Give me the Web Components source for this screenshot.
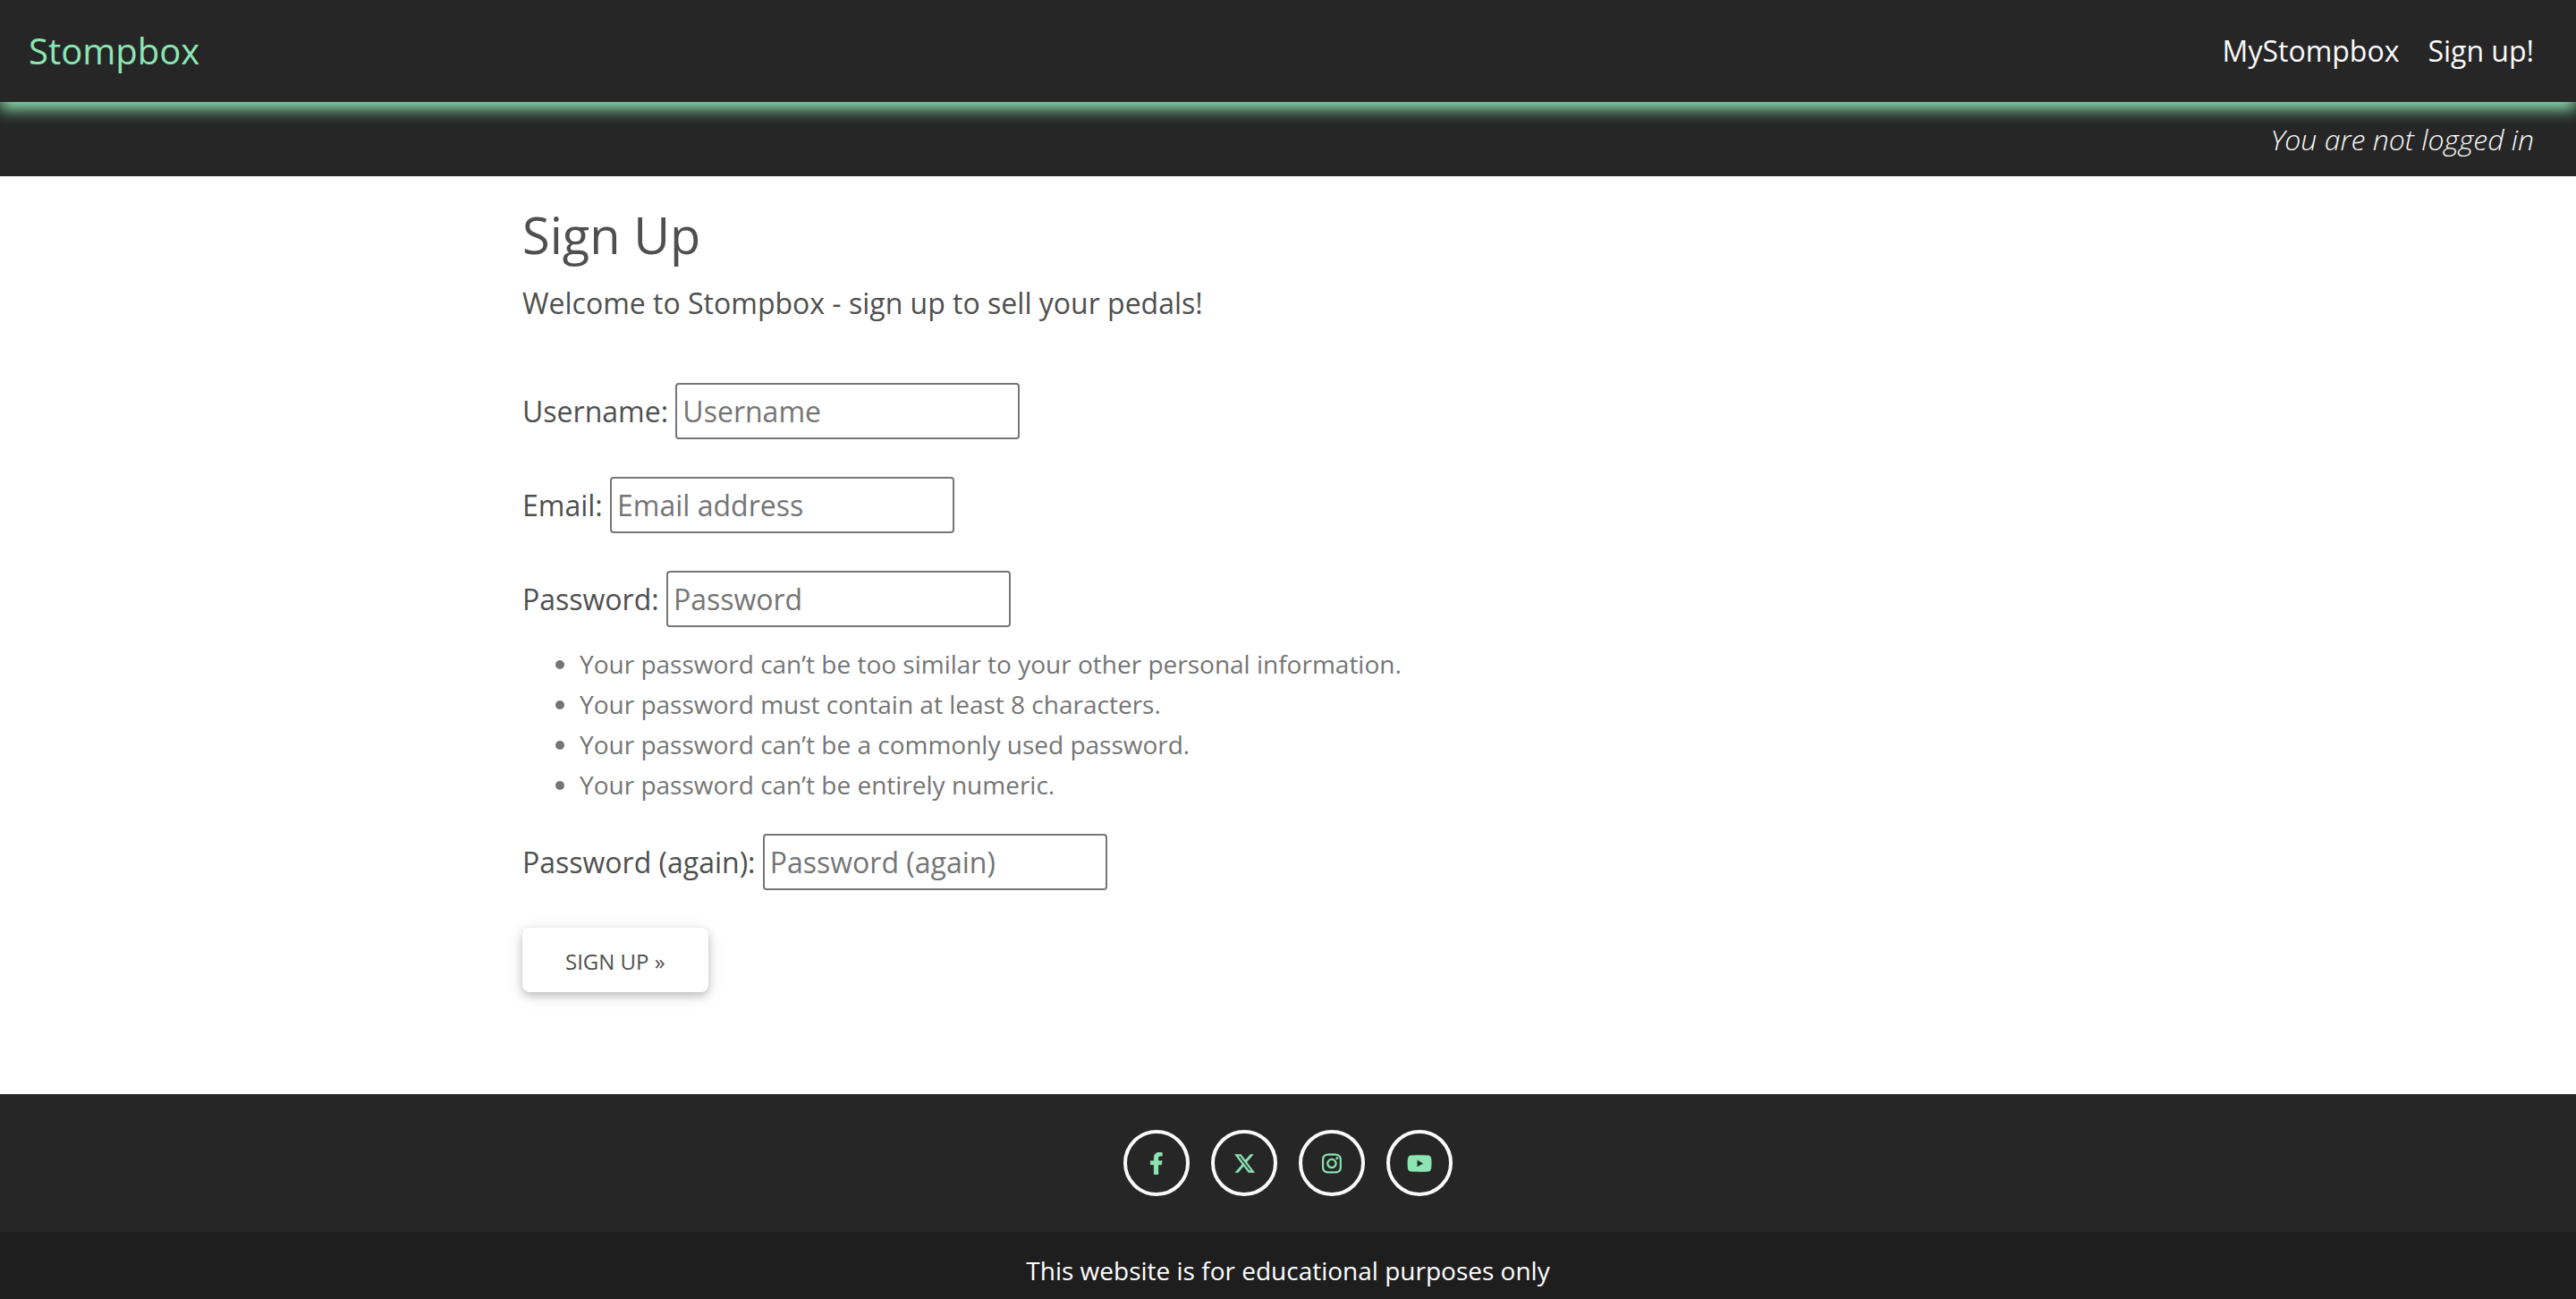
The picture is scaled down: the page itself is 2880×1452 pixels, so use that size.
<!DOCTYPE html>
<html lang="en">
<head>
<meta charset="utf-8">
<title>Stompbox - Sign Up</title>
<style>
  html { font-size: 32px; }
  body {
    --ink: #4f4f4f; --dark: #262626; --darker: #1e1e1e; --mint: #8ce6b4; --light: #fafafa;
    margin: 0; min-height: 100vh; display: flex; flex-direction: column;
    background: #fff; color: var(--ink);
    font: 32px/51px "Open Sans", "Noto Sans", sans-serif;
  }
  signup-page { flex: 1; }
</style>
</head>
<body>
<site-header>
  <a slot="brand" href="#">Stompbox</a>
  <a slot="nav" href="#">MyStompbox</a>
  <a slot="nav" href="#">Sign up!</a>
</site-header>
<status-bar>You are not logged in</status-bar>
<signup-page></signup-page>
<site-footer>This website is for educational purposes only</site-footer>

<script>
const define = (name, html) => {
  const template = document.createElement('template');
  template.innerHTML = html;
  customElements.define(name, class extends HTMLElement {
    constructor() {
      super();
      this.attachShadow({ mode: 'open' }).append(template.content.cloneNode(true));
    }
  });
};

define('site-header', `
<style>
  :host { display: block; position: relative; z-index: 1; background: var(--dark);
    box-shadow: 0 8px 16px var(--mint); }
  nav { display: flex; align-items: center; justify-content: space-between; height: 112px; padding: 0 47px 2px 32px; }
  .links { display: flex; gap: 32px; }
  ::slotted(a) { text-decoration: none; color: var(--light); }
  ::slotted(a[slot="brand"]) { color: var(--mint); font-size: 40px; }
</style>
<nav><slot name="brand"></slot><div class="links"><slot name="nav"></slot></div></nav>`);

define('status-bar', `
<style>
  :host { display: block; background: var(--dark); color: var(--light); padding: 16px 47px;
    text-align: right; font-style: italic; font-weight: 300; }
</style>
<slot></slot>`);

customElements.define('form-field', class extends HTMLElement {
  constructor() {
    super();
    const label = this.getAttribute('label');
    const hint = this.getAttribute('placeholder');
    this.attachShadow({ mode: 'open' }).innerHTML = `
<style>
  :host { display: block; }
  input { box-sizing: border-box; width: 385px; height: 63px; margin: 0; padding: 2px 6px;
    border: 2px solid #767676; border-radius: 4px; background: #fff; color: inherit; font: inherit; }
  input::placeholder { color: #757575; opacity: 1; }
</style>
<label for="field">${label}:</label>
<input id="field" type="${this.getAttribute('type')}" placeholder="${hint}">`;
  }
});

define('password-rules', `
<style>
  :host { display: block; color: #757575; font-size: 28px; line-height: 45px; }
  ul { margin: 0; padding: 0 0 0 64px; }
</style>
<ul>
  <li>Your password can’t be too similar to your other personal information.</li>
  <li>Your password must contain at least 8 characters.</li>
  <li>Your password can’t be a commonly used password.</li>
  <li>Your password can’t be entirely numeric.</li>
</ul>`);

define('raised-button', `
<style>
  :host { display: block; }
  button { display: block; border: 0; border-radius: 8px; background: #fff; color: inherit;
    padding: 20px 48px 16px; font: inherit; font-size: 24px; line-height: 36px; text-transform: uppercase;
    box-shadow: 0 4px 10px rgba(0,0,0,.2), 0 4px 20px rgba(0,0,0,.1); }
</style>
<button type="submit"><slot></slot></button>`);

define('signup-page', `
<style>
  :host { display: block; }
  main { box-sizing: border-box; max-width: 1760px; margin: 0 auto; padding: 32px 24px; }
  h1 { margin: 0 0 18px; font-size: 56px; line-height: 66px; font-weight: 500; }
  p { margin: 0 0 64px; }
  form { display: flex; flex-direction: column; align-items: flex-start; }
  form-field { margin-bottom: 42px; }
  form-field.tight { margin-bottom: 19px; }
  password-rules { margin-bottom: 32px; }
</style>
<main>
  <h1>Sign Up</h1>
  <p>Welcome to Stompbox - sign up to sell your pedals!</p>
  <form>
    <form-field label="Username" type="text" placeholder="Username"></form-field>
    <form-field label="Email" type="email" placeholder="Email address"></form-field>
    <form-field class="tight" label="Password" type="password" placeholder="Password"></form-field>
    <password-rules></password-rules>
    <form-field label="Password (again)" type="password" placeholder="Password (again)"></form-field>
    <raised-button>Sign Up »</raised-button>
  </form>
</main>`);

define('social-link', `
<style>
  :host { display: block; }
  a { box-sizing: border-box; display: flex; align-items: center; justify-content: center;
    width: 74px; height: 74px; border: 4px solid var(--light); border-radius: 50%; color: var(--mint); }
</style>
<a href="#"><slot></slot></a>`);

define('site-footer', `
<style>
  :host { display: block; text-align: center; color: #fff; }
  .social { display: flex; justify-content: center; gap: 24px; background: var(--dark); padding: 40px 32px; }
  .note { background: var(--darker); padding: 21px 32px 9px; font-size: 28px; line-height: 45px; }
  svg { display: block; height: 25px; fill: currentColor; stroke: currentColor; stroke-width: 6; }
</style>
<div class="social">
  <social-link aria-label="Facebook"><svg viewBox="0 0 320 512"><path d="M279.14 288l14.22-92.66h-88.91v-60.13c0-25.35 12.42-50.06 52.24-50.06h40.42V6.26S260.43 0 225.36 0c-73.22 0-121.08 44.38-121.08 124.72v70.62H22.89V288h81.39v224h100.17V288z"/></svg></social-link>
  <social-link aria-label="X"><svg viewBox="0 0 512 512"><path d="M389.2 48h70.6L305.6 224.2 487 464H345L233.700 318.600 106.500 464H35.800L200.700 275.500 26.800 48H172.400L272.900 180.900 389.200 48zM364.400 421.800h39.100L151.100 88h-42L364.400 421.800z"/></svg></social-link>
  <social-link aria-label="Instagram"><svg viewBox="0 0 448 512"><path d="M224.100 141c-63.600 0-114.900 51.300-114.900 114.900s51.300 114.900 114.900 114.900S339 319.500 339 255.900 287.700 141 224.100 141zm0 189.600c-41.100 0-74.700-33.500-74.700-74.700s33.500-74.700 74.700-74.700 74.700 33.500 74.700 74.700-33.600 74.700-74.700 74.700zm146.400-194.300c0 14.900-12 26.800-26.800 26.800-14.900 0-26.800-12-26.800-26.800s12-26.800 26.800-26.800 26.800 12 26.800 26.800zm76.100 27.200c-1.700-35.900-9.900-67.700-36.200-93.900-26.200-26.200-58-34.400-93.900-36.200-37-2.100-147.900-2.100-184.900 0-35.800 1.700-67.600 9.900-93.900 36.100s-34.400 58-36.200 93.900c-2.100 37-2.100 147.900 0 184.900 1.700 35.900 9.900 67.700 36.200 93.900s58 34.400 93.900 36.200c37 2.100 147.900 2.100 184.900 0 35.900-1.700 67.700-9.900 93.900-36.200 26.200-26.200 34.400-58 36.200-93.900 2.100-37 2.100-147.800 0-184.800zM398.800 388c-7.800 19.600-22.900 34.700-42.600 42.600-29.500 11.700-99.500 9-132.100 9s-102.700 2.600-132.100-9c-19.600-7.800-34.700-22.900-42.600-42.600-11.700-29.500-9-99.500-9-132.100s-2.600-102.700 9-132.100c7.800-19.600 22.900-34.700 42.600-42.600 29.500-11.700 99.500-9 132.100-9s102.700-2.600 132.100 9c19.600 7.800 34.700 22.900 42.600 42.600 11.700 29.500 9 99.500 9 132.100s2.700 102.700-9 132.100z"/></svg></social-link>
  <social-link aria-label="YouTube"><svg viewBox="0 0 576 512"><path d="M549.655 124.083c-6.281-23.650-24.787-42.276-48.284-48.597C458.781 64 288 64 288 64S117.220 64 74.629 75.486c-23.497 6.322-42.003 24.947-48.284 48.597-11.412 42.867-11.412 132.305-11.412 132.305s0 89.438 11.412 132.305c6.281 23.650 24.787 41.500 48.284 47.821C117.220 448 288 448 288 448s170.780 0 213.371-11.486c23.497-6.321 42.003-24.171 48.284-47.821 11.412-42.867 11.412-132.305 11.412-132.305s0-89.438-11.412-132.305zm-317.510 213.508V175.185l142.739 81.205-142.739 81.201z"/></svg></social-link>
</div>
<div class="note"><slot></slot></div>`);
</script>
</body>
</html>
